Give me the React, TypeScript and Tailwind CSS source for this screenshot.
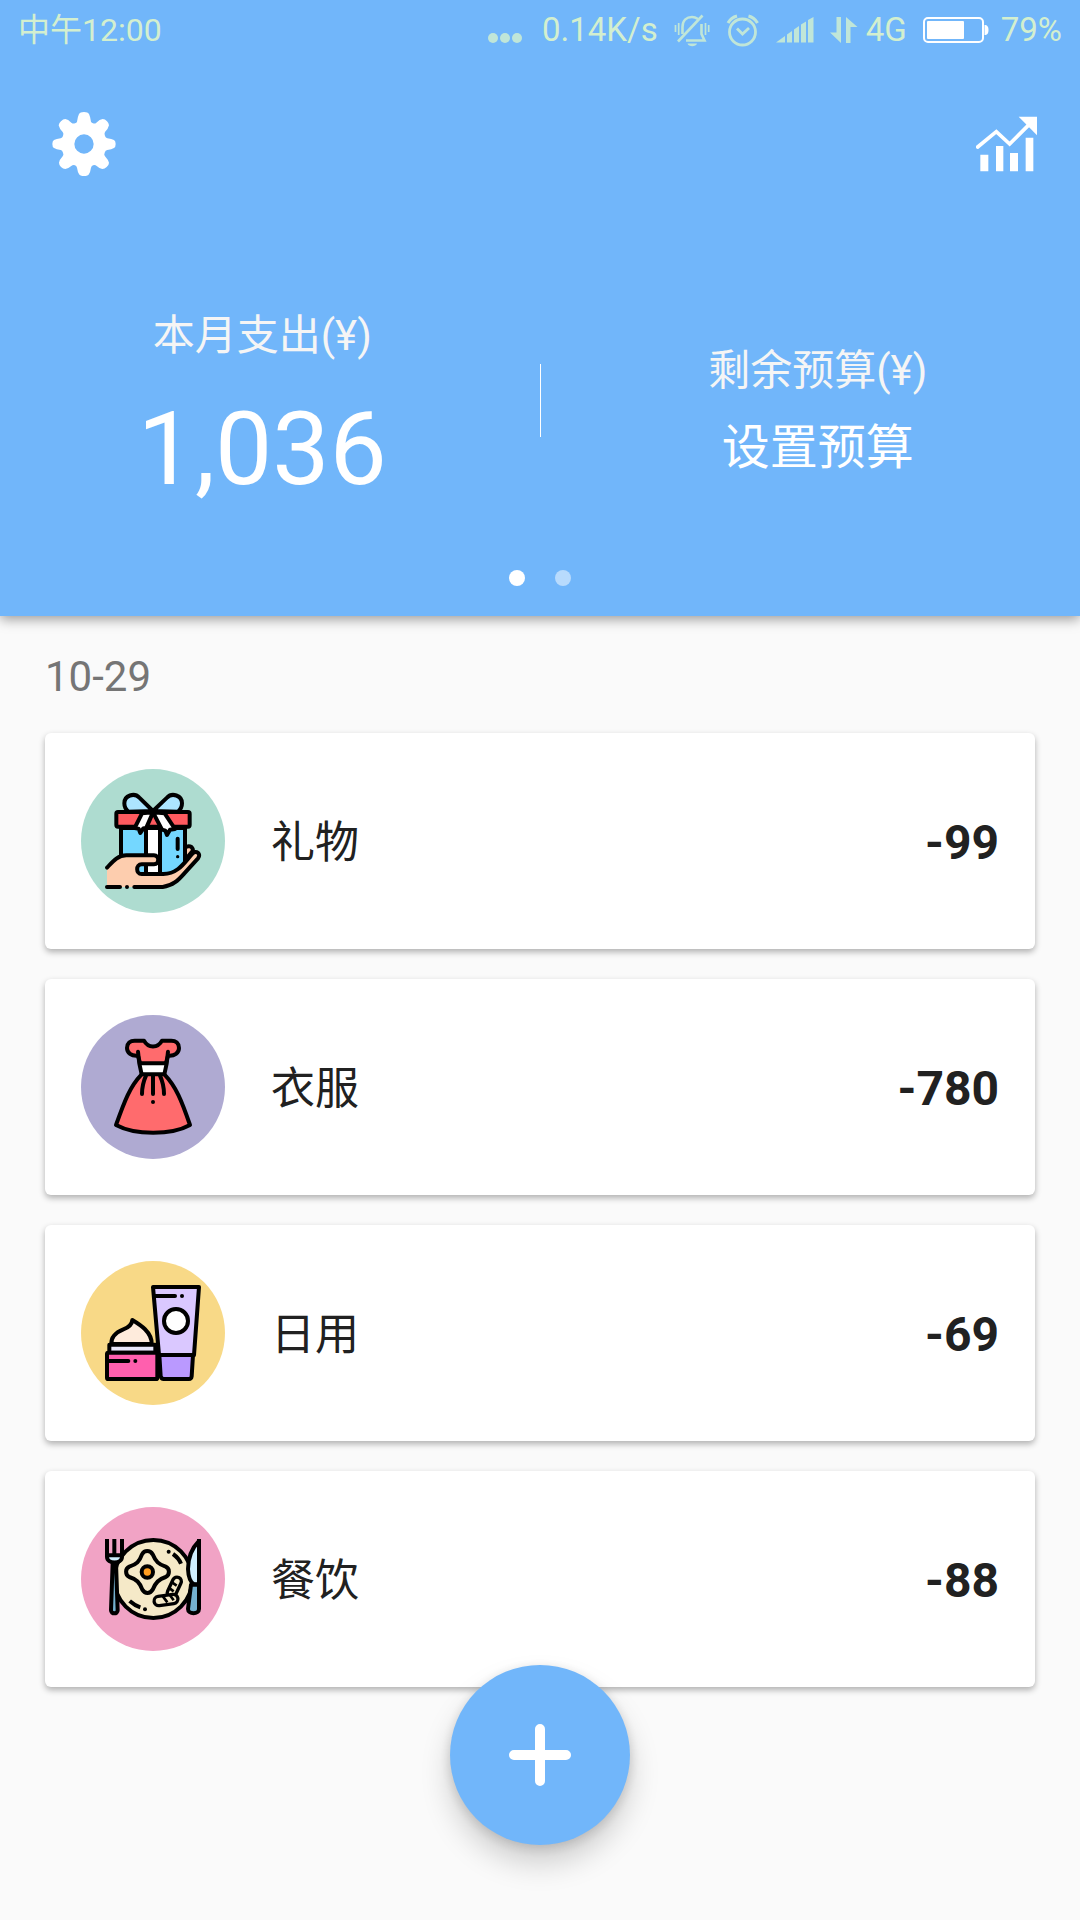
import type { ReactNode } from 'react';

type Expense = {
  name: string;
  amount: string;
  icon: ReactNode;
};

function BellOffIcon() {
  return (
    <svg width="36" height="34" viewBox="0 0 36 34" fill="none" stroke="currentColor" strokeWidth="2.6">
      <path d="M8.500 21V14C8.500 7 13 4 18 4C20.500 4 22.500 5 24 6" />
      <path d="M27.500 11V21L30.500 27.500H12" />
      <path d="M4 28.500L28.500 2.500" />
      <path d="M1.500 12V19M4.700 10V22M31.500 10V22M34.700 12V19" strokeWidth="1.700" />
      <path d="M13.500 30.500H23C22 34 14.500 34 13.500 30.500Z" fill="currentColor" stroke="none" />
    </svg>
  );
}

function AlarmIcon() {
  return (
    <svg width="34" height="34" viewBox="0 0 34 34" fill="none" stroke="currentColor" strokeWidth="2.8">
      <circle cx="16.500" cy="19" r="13" />
      <path d="M11 15.500L16.500 21L23 15" />
      <path d="M2 10C4 6.500 7 4 11 3M31.500 10C29.500 6.500 26.500 4 22.500 3" strokeWidth="3.2" />
    </svg>
  );
}

function SignalIcon() {
  return (
    <svg width="38" height="26" viewBox="0 0 38 26" fill="currentColor">
      <path d="M0 25.500L9 19V25.500Z" />
      <path d="M11 17.500L16 14V25.500H11Z" />
      <path d="M18 12.500L23 9V25.500H18Z" />
      <path d="M25 7.500L30 4.500V25.500H25Z" />
      <path d="M32 3L37.500 0V25.500H32Z" />
    </svg>
  );
}

function DataIcon() {
  return (
    <svg width="28" height="26" viewBox="0 0 28 26" fill="currentColor">
      <path d="M6.500 0H11V26L0 15.500H6.500Z" />
      <path d="M16 0L27.500 10H20.500V26H16Z" />
    </svg>
  );
}

function BatteryIcon() {
  return (
    <svg width="66" height="26" viewBox="0 0 66 26">
      <rect x="1" y="1" width="59" height="24" rx="4" fill="none" stroke="white" strokeWidth="2" />
      <rect x="4" y="4" width="37" height="18" rx="1" fill="white" />
      <path d="M61.500 8C64.500 8 65.500 10 65.500 13C65.500 16 64.500 18 61.500 18Z" fill="white" />
    </svg>
  );
}

function GearIcon() {
  return (
    <svg width="64" height="64" viewBox="68 66 190 192" fill="white">
      <path
        fillRule="evenodd"
        d="M148 72Q151 66 163 66Q175 66 178 72Q182 80 184 95Q186 99 190 100Q196 102 200 98Q210 88 219 87Q226 87 232 94Q238 100 238 106Q236 116 226 126Q223 130 226 138Q228 144 233 145Q246 147 253 150Q258 153 258 162Q258 171 253 174Q246 178 233 180Q227 181 225 188Q222 194 226 199Q236 210 238 218Q238 225 231 231Q225 237 218 237Q210 236 200 227Q196 223 190 226Q185 228 184 233Q182 246 178 252Q175 258 163 258Q151 258 148 252Q144 246 142 233Q141 228 136 226Q130 223 126 227Q115 236 107 237Q100 237 94 231Q88 225 88 218Q89 210 99 199Q103 194 100 188Q98 181 93 180Q80 178 73 174Q68 171 68 162Q68 153 73 150Q80 147 93 145Q98 144 100 138Q103 130 99 126Q89 116 87 106Q87 100 94 94Q100 87 107 87Q115 88 125 98Q130 102 136 100Q141 98 142 95Q144 80 148 72ZM163 133A29 29 0 1 0 163 191A29 29 0 1 0 163 133Z"
      />
    </svg>
  );
}

function TrendIcon() {
  return (
    <svg width="62" height="56" viewBox="79 78 186 168" fill="white">
      <path d="M92 194H116V244H92ZM139 168H161V244H139ZM181 189H205V244H181ZM228 143H251V244H228Z" />
      <path d="M84 171L140 125L180 162L238 104" fill="none" stroke="white" strokeWidth="11" strokeLinecap="round" />
      <path d="M207 80H262V136Z" />
    </svg>
  );
}

function GiftIcon() {
  return (
    <svg className="size-36" viewBox="33 27 432 432" fill="none" stroke="black" strokeWidth="12" strokeLinecap="round" strokeLinejoin="round">
      <circle cx="249" cy="243" r="216" fill="#aedcd0" stroke="none" />
      <path d="M345 263C355 255 368 258 369 272L345 300Z" fill="#fdcdae" />
      <path d="M153 204H345V320L300 343H153Z" fill="#74d7ff" />
      <path d="M228 204H270V343H228Z" fill="white" />
      <path d="M249 153L208 113C193 97 163 106 163 130C163 141 168 149 175 155ZM249 153L291 113C306 97 336 106 336 130C336 141 331 149 324 155Z" fill="#ade5ff" />
      <rect x="139" y="156" width="220" height="44" rx="5" fill="#ff5a5f" />
      <path d="M216 160L194 204L206 206L211 219L220 205L229 203L249 157Z" fill="white" />
      <path d="M249 157L276 209L286 212L291 225L300 209L315 207L284 160Z" fill="white" />
      <path d="M323 236V267" />
      <circle cx="323" cy="290" r="5" fill="black" stroke="none" />
      <path
        d="M111 323C128 305 143 286 169 286H252C269 286 269 313 252 313H215C197 313 197 342 215 342H280C326 342 346 303 368 280C378 269 395 282 384 295L343 340C325 360 310 377 278 381H111Z"
        fill="#fdcdae"
        stroke="none"
      />
      <path d="M111 323C128 305 143 286 169 286H252C269 286 269 313 252 313H215C197 313 197 342 215 342H280C326 342 346 303 368 280C378 269 395 282 384 295L343 340C325 360 310 377 278 381H193M111 381H150M171 381V381" />
    </svg>
  );
}

function DressIcon() {
  return (
    <svg className="size-36" viewBox="33 30 432 432" fill="none" stroke="black" strokeWidth="12" strokeLinecap="round" strokeLinejoin="round">
      <circle cx="249" cy="246" r="216" fill="#afaad2" stroke="none" />
      <path d="M204 152C184 154 171 144 171 129C171 115 181 107 194 107H222C234 130 264 130 276 107H304C317 107 327 115 327 129C327 144 314 154 294 152L287 177H211Z" fill="#ff6b6d" />
      <path d="M210 175H288L283 208H215Z" fill="white" stroke="none" />
      <path d="M215 208C180 244 164 287 138 360C195 391 304 391 360 360C335 287 318 244 283 208Z" fill="#ff6b6d" />
      <path d="M204 140L208 176L215 208M294 140L290 176L283 208M211 175H287" />
      <path d="M249 212V267M228 212C220 230 216 247 216 267M270 212C278 230 282 247 282 267" />
      <circle cx="249" cy="291" r="6" fill="black" stroke="none" />
    </svg>
  );
}

function CosmeticsIcon() {
  return (
    <svg className="size-36" viewBox="33 33 432 432" fill="none" stroke="black" strokeWidth="12" strokeLinecap="round" strokeLinejoin="round">
      <circle cx="249" cy="249" r="216" fill="#f8d987" stroke="none" />
      <path d="M249 111H387L372 315H267Z" fill="#dac8ff" />
      <path d="M268 315H369L365 379Q364 387 357 387H281Q274 387 272 379Z" fill="#ba99ff" />
      <path d="M256 138H315" />
      <circle cx="336" cy="138" r="6" fill="black" stroke="none" />
      <circle cx="318" cy="213" r="36" fill="white" />
      <path d="M124 282C123 258 140 246 160 238C177 232 186 222 187 210C210 224 246 246 245 282Z" fill="#feebdc" />
      <path d="M118 284H256V308H118Z" fill="#e9e7fb" />
      <rect x="111" y="308" width="151" height="79" rx="4" fill="#ff5fae" />
      <path d="M116 333H175" />
      <circle cx="196" cy="333" r="6" fill="black" stroke="none" />
    </svg>
  );
}

function MealIcon() {
  return (
    <svg className="size-36" viewBox="33 36 432 432" fill="none" stroke="black" strokeWidth="12" strokeLinejoin="round">
      <circle cx="249" cy="252" r="216" fill="#f1a3c5" stroke="none" />
      <circle cx="250" cy="252" r="117" fill="#f5e9c8" />
      <path
        d="M216 178C223 165 240 165 248 178C257 200 266 208 287 215C300 221 300 239 287 246C266 253 257 262 248 284C240 297 225 297 217 284C209 262 200 253 178 246C165 239 165 221 178 215C200 208 208 200 216 178Z"
        fill="#f5e9c8"
      />
      <circle cx="232" cy="231" r="17" fill="#ff9d20" />
      <path d="M309 177C319 184 328 194 333 206M179 318C188 326 199 333 211 337" />
      <circle cx="296" cy="170" r="6" fill="black" stroke="none" />
      <circle cx="225" cy="343" r="6" fill="black" stroke="none" />
      <rect x="300" y="244" width="26" height="64" rx="13" transform="rotate(25 312 276)" fill="#f5e9c8" strokeWidth="10" />
      <rect x="252" y="301" width="72" height="28" rx="14" transform="rotate(-8 288 315)" fill="#f5e9c8" strokeWidth="10" />
      <path d="M277 302L292 322M300 301L311 316M307 263L320 272M299 280L311 289" strokeWidth="8" />
      <path d="M128 205L123 346C123 358 143 358 143 346L138 205Z" fill="#74b1cf" />
      <path d="M117 181H150V187C150 206 117 206 117 187Z" fill="#cfeffd" stroke="none" />
      <path d="M111 132V185C111 208 156 208 156 185V132M133 132V180M111 181H156" />
      <path d="M387 138C360 165 354 194 354 222C355 247 363 263 372 268H387Z" fill="#cfeffd" />
      <path d="M363 269H387V342C387 359 354 359 354 342Z" fill="#74b1cf" />
      <path d="M387 132V342" />
    </svg>
  );
}

const expenses: Expense[] = [
  { name: '礼物', amount: '-99', icon: <GiftIcon /> },
  { name: '衣服', amount: '-780', icon: <DressIcon /> },
  { name: '日用', amount: '-69', icon: <CosmeticsIcon /> },
  { name: '餐饮', amount: '-88', icon: <MealIcon /> },
];

function StatusBar() {
  return (
    <div className="flex h-[60px] items-center justify-between px-[18px] text-[#d3efcf]">
      <span className="text-[32px] leading-9">中午12:00</span>
      <div className="flex items-center gap-4 text-[33px] leading-9">
        <svg className="mt-4 mr-1 text-[#c0e6d8]" width="34" height="10" viewBox="0 0 34 10" fill="currentColor">
          <circle cx="5" cy="5" r="5" />
          <circle cx="17" cy="5" r="5" />
          <circle cx="29" cy="5" r="5" />
        </svg>
        <span>0.14K/s</span>
        <div className="flex items-center gap-4 text-[#c0e6d8]">
          <BellOffIcon />
          <AlarmIcon />
          <SignalIcon />
        </div>
        <div className="flex items-center gap-2">
          <span className="text-[#c0e6d8]">
            <DataIcon />
          </span>
          <span>4G</span>
        </div>
        <div className="flex items-center gap-3">
          <BatteryIcon />
          <span>79%</span>
        </div>
      </div>
    </div>
  );
}

function Header() {
  return (
    <header className="relative z-10 bg-[#71b6fa] pb-[30px] text-white shadow-[0_3px_12px_rgba(0,0,0,0.4)]">
      <StatusBar />
      <div className="flex items-center justify-between px-[42px] pt-[52px]">
        <button type="button" aria-label="设置" className="ml-2.5">
          <GearIcon />
        </button>
        <button type="button" aria-label="统计">
          <TrendIcon />
        </button>
      </div>

      <div className="mt-32 flex h-[192px] items-center">
        <div className="flex flex-1 flex-col items-center pt-5">
          <p className="text-[42px] leading-[50px] text-[#f5f5f5]">本月支出(¥)</p>
          <p className="mt-7 text-[102px] leading-[120px]">1,036</p>
        </div>
        <div className="mx-[15px] h-[73px] w-px bg-white" />
        <div className="flex flex-1 flex-col items-center pt-6">
          <p className="text-[42px] leading-[50px] text-[#f5f5f5]">剩余预算(¥)</p>
          <button type="button" className="mt-[22px] text-[48px] leading-[60px]">
            设置预算
          </button>
        </div>
      </div>

      <div className="mt-[74px] flex justify-center gap-[30px]">
        <span className="size-4 rounded-full bg-white" />
        <span className="size-4 rounded-full bg-white/50" />
      </div>
    </header>
  );
}

function ExpenseCard({ expense }: { expense: Expense }) {
  return (
    <li className="flex items-center rounded-md bg-white p-9 shadow-[0_3px_6px_rgba(0,0,0,0.3)]">
      {expense.icon}
      <span className="ml-[46px] flex-1 pt-1 text-[44px]">{expense.name}</span>
      <span className="pt-1 text-[48px] font-bold">{expense.amount}</span>
    </li>
  );
}

export default function App() {
  return (
    <div className="relative min-h-screen bg-[#fafafa] font-['Roboto','Noto_Sans_CJK_SC',sans-serif] text-[#212121]">
      <Header />

      <main className="px-[45px] pb-60">
        <h2 className="pt-9 pb-[31px] text-[42px] leading-[50px] text-[#757575]">10-29</h2>
        <ul className="flex flex-col gap-[30px]">
          {expenses.map((expense) => (
            <ExpenseCard key={expense.name} expense={expense} />
          ))}
        </ul>
      </main>

      <button
        type="button"
        aria-label="添加"
        className="fixed bottom-[75px] left-1/2 z-20 flex size-[180px] -translate-x-1/2 items-center justify-center rounded-full bg-[#71b6fa] shadow-[0_18px_30px_rgba(0,0,0,0.18),0_3px_12px_rgba(0,0,0,0.15)]"
      >
        <svg width="64" height="64" viewBox="0 0 64 64" stroke="white" strokeWidth="10" strokeLinecap="round">
          <path d="M32 6V58M6 32H58" />
        </svg>
      </button>
    </div>
  );
}
